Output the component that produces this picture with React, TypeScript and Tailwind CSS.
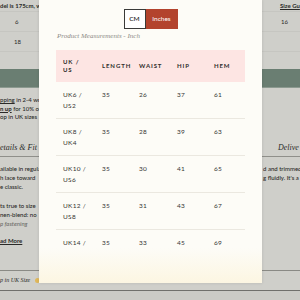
import React from "react";

const rows = [
  ["UK6 /", "US2", "35", "26", "37", "61"],
  ["UK8 /", "UK4", "35", "28", "39", "63"],
  ["UK10 /", "US6", "35", "30", "41", "65"],
  ["UK12 /", "US8", "35", "31", "43", "67"],
  ["UK14 /", "US10", "35", "33", "45", "69"],
];

export default function App() {
  return (
    <div
      className="relative w-[300px] h-[300px] overflow-hidden bg-[#cfcfca] text-[#2a2a28]"
      style={{ fontFamily: "Lato, 'Noto Sans', sans-serif" }}
    >
      {/* Background page */}
      <div className="flex flex-col w-[300px] text-[6px]">
        <div className="flex h-[11px] items-center">
          <div className="w-[150px] whitespace-nowrap overflow-hidden font-bold">del is 175cm, wearing a size 8</div>
          <div className="w-[150px] pl-[130px] whitespace-nowrap overflow-hidden font-bold underline">Size Gu</div>
        </div>
        <div className="h-px bg-[#c6c6c1]" />
        <div className="flex h-[19px] items-center">
          <div className="w-[150px] pl-[15px]">6</div>
          <div className="w-[150px] pl-[131px]">16</div>
        </div>
        <div className="h-px bg-[#c6c6c1]" />
        <div className="flex h-[19px] items-center">
          <div className="w-[150px] pl-[14px]">18</div>
          <div className="w-[150px]" />
        </div>
        <div className="h-px bg-[#c6c6c1]" />
        <div className="h-[17px]" />
        <div className="h-[18px] bg-[#6a7e72]" />
        <div className="h-px bg-[#8c9a90]" />
        <div className="h-[8px]" />
        <div className="flex flex-col leading-[8.5px] font-medium">
          <div className="whitespace-nowrap"><span className="underline">pping</span> in 2-4 working days</div>
          <div className="whitespace-nowrap"><span className="underline font-bold">n up</span> for 10% off</div>
          <div className="whitespace-nowrap">op in UK sizes</div>
        </div>
        <div className="h-[20px]" />
        <div className="flex h-[12px] items-center">
          <div
            className="w-[150px] whitespace-nowrap italic text-[8px]"
            style={{ fontFamily: "'Liberation Serif', serif" }}
          >
            etails &amp; Fit
          </div>
          <div
            className="w-[150px] pl-[128px] whitespace-nowrap italic text-[8px] overflow-hidden"
            style={{ fontFamily: "'Liberation Serif', serif" }}
          >
            Delive
          </div>
        </div>
        <div className="h-[2px]" />
        <div className="h-px bg-[#8f8f8a]" />
        <div className="h-[7px]" />
        <div className="flex leading-[9px] font-medium">
          <div className="w-[150px] flex flex-col whitespace-nowrap">
            <div>ailable in regular</div>
            <div>h lace toward</div>
            <div>e classic.</div>
          </div>
          <div className="w-[150px] pl-[113px] flex flex-col whitespace-nowrap">
            <div>d and trimmed</div>
            <div>g fluidly. It's a</div>
          </div>
        </div>
        <div className="h-[10px]" />
        <div className="flex flex-col leading-[9px] font-medium whitespace-nowrap">
          <div>ts true to size</div>
          <div>nen-blend: no</div>
          <div className="text-[#6d6d69] italic">p fastening</div>
        </div>
        <div className="h-[8px]" />
        <div className="leading-[9px] font-bold underline whitespace-nowrap">ad More</div>
        <div className="h-[25px]" />
        <div className="h-px bg-[#8a8a85]" />
        <div className="flex h-[19px] items-center">
          <div
            className="w-[35px] italic whitespace-nowrap text-[6px]"
            style={{ fontFamily: "'Liberation Serif', serif" }}
          >
            p in UK Size
          </div>
          <div className="w-[5px] h-[5px] rounded-full bg-[#e0b85a]" />
        </div>
        <div className="h-px bg-[#70706c]" />
        <div className="h-[12px] bg-[#cbcbc6]" />
      </div>

      {/* Modal */}
      <div className="absolute left-[39px] top-0 w-[223px] h-[283px] bg-[#fdfcf7] shadow-[0_0_3px_rgba(0,0,0,0.12)] overflow-hidden">
        <div className="flex flex-col items-center pt-[9px]">
          <div className="flex">
            <div className="w-[22px] h-[20px] border border-[#3a3a38] bg-white flex items-center justify-center text-[6.5px] font-semibold text-[#2a2a28]">
              CM
            </div>
            <div className="w-[32px] h-[20px] bg-[#b3432d] flex items-center justify-center text-[6.5px] text-white">
              Inches
            </div>
          </div>
          <div
            className="self-start ml-[18px] mt-[2px] leading-[10px] italic text-[7px] text-[#8c8a86]"
            style={{ fontFamily: "'Liberation Serif', serif" }}
          >
            Product Measurements - Inch
          </div>
          <div className="self-stretch mx-[17px] mt-[9px] flex flex-col">
            <div className="h-[32px] bg-[#fde5e3] grid grid-cols-[39px_37px_38px_37px_1fr] pl-[7px] items-center text-[6px] font-bold tracking-[0.9px] text-[#2e2e2c] leading-[8.5px]">
              <div className="flex flex-col">
                <span>UK /</span>
                <span>US</span>
              </div>
              <div>LENGTH</div>
              <div>WAIST</div>
              <div>HIP</div>
              <div>HEM</div>
            </div>
            {rows.map((r, i) => (
              <div
                key={i}
                className="grid grid-cols-[39px_37px_38px_37px_1fr] pl-[7px] pt-[6.5px] pb-[7.5px] border-b border-[#ebe8e0] text-[6.5px] leading-[11px] text-[#353533] tracking-[0.3px]"
              >
                <div className="flex flex-col">
                  <span>{r[0]}</span>
                  <span>{r[1]}</span>
                </div>
                <div>{r[2]}</div>
                <div>{r[3]}</div>
                <div>{r[4]}</div>
                <div>{r[5]}</div>
              </div>
            ))}
          </div>
        </div>
        <div className="absolute left-0 right-0 bottom-0 h-[35px] bg-gradient-to-b from-[#fdfcf7] to-[#fcf6e2]" />
      </div>
    </div>
  );
}
